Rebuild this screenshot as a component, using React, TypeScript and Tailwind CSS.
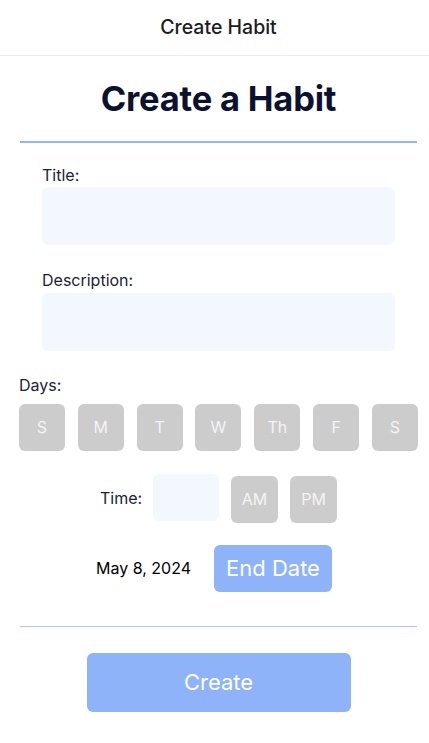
import { useState } from "react";

const days = ["S", "M", "T", "W", "Th", "F", "S"];

export default function App() {
  const [title, setTitle] = useState("");
  const [description, setDescription] = useState("");
  const [time, setTime] = useState("");

  return (
    <div className="w-[429px] h-[743px] bg-white overflow-hidden">
      <div
        className="w-[437px]"
        style={{ fontFamily: "Inter, 'Noto Sans', sans-serif" }}
      >
        {/* Barra superior */}
        <div className="h-[56px] border-b border-[#ededed] flex items-center justify-center">
          <span className="text-[19.5px] font-medium text-[#1c1c1e]">Create Habit</span>
        </div>

        <h1 className="mt-[23px] h-[40px] leading-[40px] text-center text-[34.5px] font-bold text-[#0b1230] tracking-[-0.2px]">
          Create a Habit
        </h1>

        <div className="mt-[22px] mx-[20px] h-[1.5px] bg-[#92b6f8]" />

        <div className="px-[42px]">
          <label className="block mt-[22px] leading-[20px] text-[16px] text-[#1d2233]">Title:</label>
          <input
            value={title}
            onChange={(e) => setTitle(e.target.value)}
            className="mt-[2px] w-full h-[58px] rounded-md bg-[#f3f8fe] px-3 outline-none"
          />

          <label className="block mt-[25px] leading-[20px] text-[16px] text-[#1d2233]">Description:</label>
          <input
            value={description}
            onChange={(e) => setDescription(e.target.value)}
            className="mt-[3px] w-full h-[58px] rounded-md bg-[#f3f8fe] px-3 outline-none"
          />
        </div>

        <div className="px-[19px]">
          <div className="mt-[24px] leading-[20px] text-[16px] text-[#1d2233]">Days:</div>
          <div className="mt-[9px] flex justify-between">
            {days.map((d, i) => (
              <button
                key={i}
                className="w-[46px] h-[47px] rounded-md bg-[#cccccc] text-[16px] text-[#f4f4f4]"
              >
                {d}
              </button>
            ))}
          </div>
        </div>

        {/* Hora */}
        <div className="mt-[22px] ml-[100px] flex items-center">
          <span className="text-[16px] text-[#1d2233] w-[41px]">Time:</span>
          <input
            value={time}
            onChange={(e) => setTime(e.target.value)}
            className="ml-[12px] w-[66px] h-[47px] rounded-md bg-[#f3f8fe] outline-none text-center"
          />
          <button className="ml-[12px] mt-[3px] w-[47px] h-[47px] rounded-md bg-[#cccccc] text-[16px] text-[#f4f4f4]">
            AM
          </button>
          <button className="ml-[12px] mt-[3px] w-[47px] h-[47px] rounded-md bg-[#cccccc] text-[16px] text-[#f4f4f4]">
            PM
          </button>
        </div>

        {/* Data final */}
        <div className="mt-[22px] ml-[96px] flex items-center">
          <span className="text-[16px] text-black w-[94px] whitespace-nowrap">May 8, 2024</span>
          <button className="ml-[24px] w-[118px] h-[47px] rounded-md bg-[#8eb3f8] text-[22px] text-white">
            End Date
          </button>
        </div>

        <div className="mt-[34px] mx-[20px] h-[1.5px] bg-[#a9c7fb]" />

        <div className="mt-[26px] flex justify-center">
          <button className="w-[264px] h-[59px] rounded-md bg-[#8eb3f8] text-[22px] text-white">
            Create
          </button>
        </div>
      </div>
    </div>
  );
}
